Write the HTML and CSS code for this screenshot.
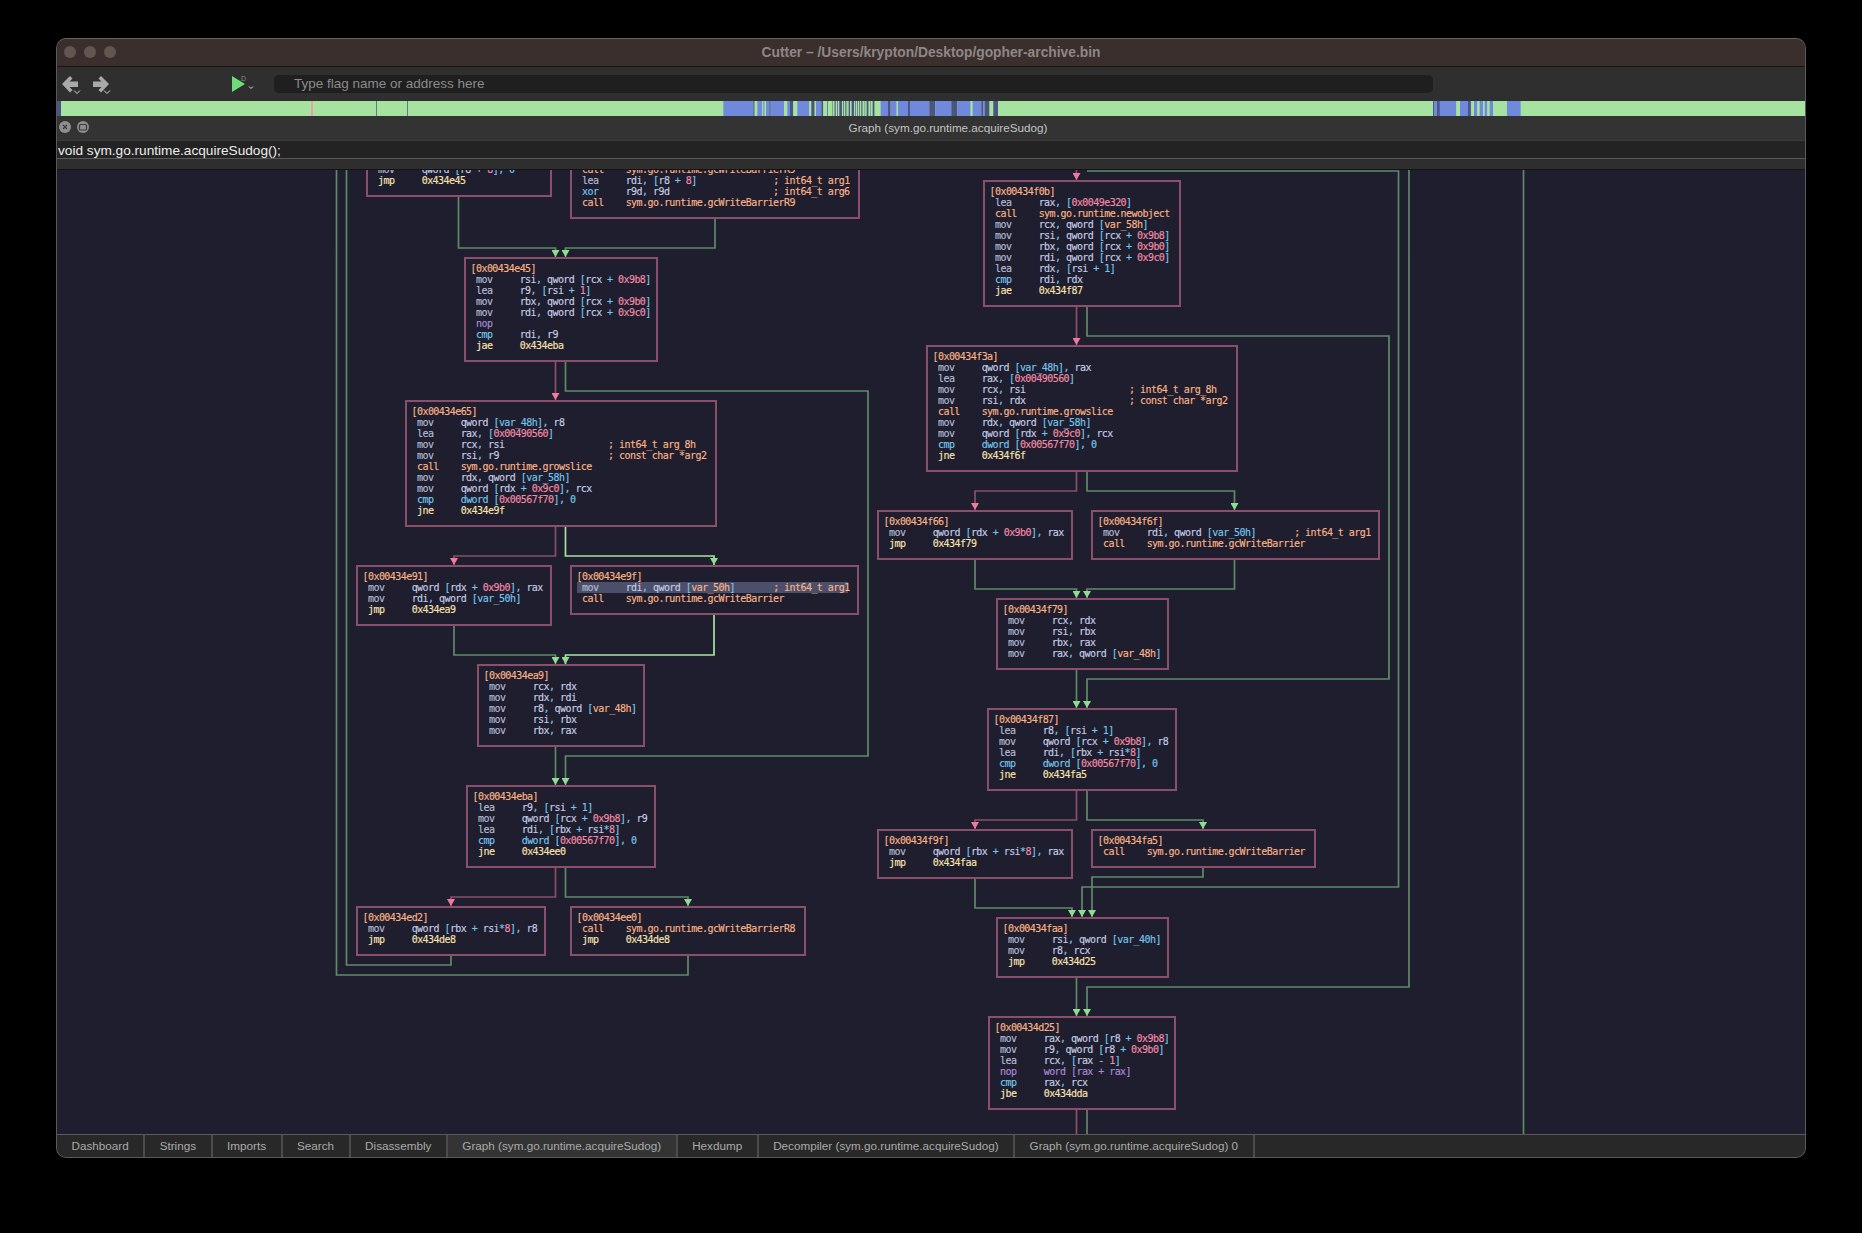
FILE: index.html
```html
<!DOCTYPE html>
<html lang="en">
<head>
    <meta charset="UTF-8">
    <title>Cutter</title>
    <link rel="stylesheet" href="styles.css">
</head>
<body>
    <div class="window">
        <div class="titlebar">
            <div class="lights"><span></span><span></span><span></span></div>
            <div class="title">Cutter – /Users/krypton/Desktop/gopher-archive.bin</div>
        </div>

        <div class="toolbar">
            <svg class="nav" width="22" height="20" viewBox="0 0 22 20">
                <path class="nav-arrow" d="M0 9 8 1l2.5 2.500L7.500 6.500H16v5.500H7.500l3 3L8 17.500z"/>
                <path class="nav-chev" d="M12 15.500l3 3 3-3"/>
            </svg>
            <svg class="nav" width="22" height="20" viewBox="0 0 22 20">
                <path class="nav-arrow" d="M17 9 9 1 6.500 3.500l3 3H1v5.500h8.500l-3 3L9 17.500z"/>
                <path class="nav-chev" d="M12 15.500l3 3 3-3"/>
            </svg>
            <svg class="run" width="28" height="18" viewBox="0 0 28 18">
                <path class="run-play" d="M0 1 13 9 0 17z"/>
                <text class="run-d" x="9" y="6">D</text>
                <path class="nav-chev" d="M17 11.500l2 2 2-2"/>
            </svg>
            <div class="search">Type flag name or address here</div>
        </div>

        <svg class="overview" width="1748" height="15" viewBox="57 0 1748 15">
            <rect class="ov-green" x="57" width="1748" height="15"/>
            <rect class="ov-dark" x="57" width="4" height="15"/>
            <rect class="ov-pink" x="311" width="2" height="15"/>
            <rect class="ov-line" x="376" width="1" height="15"/>
            <rect class="ov-line" x="407" width="1" height="15"/>
            <g transform="translate(720) scale(.3333 1)">
                <rect class="ov-blue" x="10" width="90" height="15"/>
                <rect class="ov-dark" x="100" width="4" height="15"/>
                <rect class="ov-green" x="104" width="8" height="15"/>
                <rect class="ov-blue" x="112" width="15" height="15"/>
                <rect class="ov-green" x="127" width="3" height="15"/>
                <rect class="ov-blue" x="130" width="4" height="15"/>
                <rect class="ov-green" x="134" width="4" height="15"/>
                <rect class="ov-blue" x="138" width="10" height="15"/>
                <rect class="ov-dark" x="148" width="4" height="15"/>
                <rect class="ov-blue" x="152" width="40" height="15"/>
                <rect class="ov-green" x="192" width="10" height="15"/>
                <rect class="ov-blue" x="202" width="8" height="15"/>
                <rect class="ov-dark" x="210" width="10" height="15"/>
                <rect class="ov-green" x="220" width="12" height="15"/>
                <rect class="ov-blue" x="232" width="36" height="15"/>
                <rect class="ov-green" x="268" width="6" height="15"/>
                <rect class="ov-dark" x="274" width="10" height="15"/>
                <rect class="ov-green" x="284" width="4" height="15"/>
                <rect class="ov-blue" x="288" width="16" height="15"/>
                <rect class="ov-dark" x="304" width="6" height="15"/>
                <rect class="ov-green" x="310" width="12" height="15"/>
                <rect class="ov-dark" x="322" width="2" height="15"/>
                <rect class="ov-green" x="324" width="12" height="15"/>
                <rect class="ov-dark" x="336" width="2" height="15"/>
                <rect class="ov-green" x="338" width="4" height="15"/>
                <rect class="ov-dark" x="342" width="2" height="15"/>
                <rect class="ov-green" x="344" width="2" height="15"/>
                <rect class="ov-dark" x="346" width="2" height="15"/>
                <rect class="ov-green" x="348" width="4" height="15"/>
                <rect class="ov-dark" x="352" width="2" height="15"/>
                <rect class="ov-green" x="354" width="4" height="15"/>
                <rect class="ov-dark" x="358" width="8" height="15"/>
                <rect class="ov-green" x="366" width="4" height="15"/>
                <rect class="ov-dark" x="370" width="2" height="15"/>
                <rect class="ov-green" x="372" width="4" height="15"/>
                <rect class="ov-dark" x="376" width="2" height="15"/>
                <rect class="ov-green" x="378" width="2" height="15"/>
                <rect class="ov-dark" x="380" width="2" height="15"/>
                <rect class="ov-green" x="382" width="4" height="15"/>
                <rect class="ov-dark" x="386" width="4" height="15"/>
                <rect class="ov-green" x="390" width="5" height="15"/>
                <rect class="ov-dark" x="395" width="7" height="15"/>
                <rect class="ov-green" x="402" width="4" height="15"/>
                <rect class="ov-dark" x="406" width="2" height="15"/>
                <rect class="ov-green" x="408" width="4" height="15"/>
                <rect class="ov-dark" x="412" width="2" height="15"/>
                <rect class="ov-green" x="414" width="4" height="15"/>
                <rect class="ov-dark" x="418" width="2" height="15"/>
                <rect class="ov-green" x="420" width="4" height="15"/>
                <rect class="ov-dark" x="424" width="4" height="15"/>
                <rect class="ov-green" x="428" width="6" height="15"/>
                <rect class="ov-dark" x="434" width="2" height="15"/>
                <rect class="ov-green" x="436" width="4" height="15"/>
                <rect class="ov-dark" x="440" width="6" height="15"/>
                <rect class="ov-green" x="446" width="4" height="15"/>
                <rect class="ov-dark" x="450" width="2" height="15"/>
                <rect class="ov-green" x="452" width="6" height="15"/>
                <rect class="ov-dark" x="458" width="6" height="15"/>
                <rect class="ov-green" x="464" width="18" height="15"/>
                <rect class="ov-blue" x="482" width="22" height="15"/>
                <rect class="ov-dark" x="504" width="8" height="15"/>
                <rect class="ov-blue" x="512" width="18" height="15"/>
                <rect class="ov-green" x="530" width="4" height="15"/>
                <rect class="ov-blue" x="534" width="30" height="15"/>
                <rect class="ov-dark" x="564" width="6" height="15"/>
                <rect class="ov-blue" x="570" width="58" height="15"/>
                <rect class="ov-dark" x="628" width="18" height="15"/>
                <rect class="ov-blue" x="646" width="48" height="15"/>
                <rect class="ov-dark" x="694" width="18" height="15"/>
                <rect class="ov-blue" x="712" width="40" height="15"/>
                <rect class="ov-green" x="752" width="6" height="15"/>
                <rect class="ov-blue" x="758" width="26" height="15"/>
                <rect class="ov-dark" x="784" width="6" height="15"/>
                <rect class="ov-blue" x="790" width="4" height="15"/>
                <rect class="ov-dark" x="794" width="14" height="15"/>
                <rect class="ov-dark" x="820" width="14" height="15"/>
            </g>
            <g transform="translate(1428) scale(.3333 1)">
                <rect class="ov-blue" x="15" width="70" height="15"/>
                <rect class="ov-dark" x="15" width="3" height="15"/>
                <rect class="ov-dark" x="27" width="8" height="15"/>
                <rect class="ov-green" x="85" width="5" height="15"/>
                <rect class="ov-green" x="93" width="3" height="15"/>
                <rect class="ov-blue" x="96" width="34" height="15"/>
                <rect class="ov-dark" x="120" width="8" height="15"/>
                <rect class="ov-green" x="130" width="8" height="15"/>
                <rect class="ov-blue" x="138" width="10" height="15"/>
                <rect class="ov-green" x="148" width="7" height="15"/>
                <rect class="ov-blue" x="155" width="10" height="15"/>
                <rect class="ov-green" x="165" width="5" height="15"/>
                <rect class="ov-blue" x="170" width="8" height="15"/>
                <rect class="ov-green" x="178" width="7" height="15"/>
                <rect class="ov-blue" x="185" width="10" height="15"/>
                <rect class="ov-blue" x="237" width="41" height="15"/>
            </g>
        </svg>

        <div class="dock-title">
            <div class="dock-btns">
                <svg width="14" height="14" viewBox="0 0 14 14">
                    <circle class="dock-btn" cx="7" cy="7" r="6"/>
                    <path class="dock-mark" d="M5 5l4 4M9 5l-4 4"/>
                </svg>
                <svg width="14" height="14" viewBox="0 0 14 14">
                    <circle class="dock-btn" cx="7" cy="7" r="6"/>
                    <rect class="dock-mark" x="3.500" y="4.500" width="7" height="5.500" rx="1"/>
                </svg>
            </div>
            <div class="dock-name">Graph (sym.go.runtime.acquireSudog)</div>
        </div>

        <div class="signature">void sym.go.runtime.acquireSudog();</div>
        <div class="strip"></div>

        <div class="graph">
            <svg class="edges" width="1748" height="966" viewBox="57 170 1748 966">
                <defs>
                    <marker id="tip-green" markerUnits="userSpaceOnUse" markerWidth="7" markerHeight="8" refX="7" refY="4" orient="auto"><path d="M0 0 7 4 0 8z" fill="#8fdc92"/></marker>
                    <marker id="tip-pink" markerUnits="userSpaceOnUse" markerWidth="7" markerHeight="8" refX="7" refY="4" orient="auto"><path d="M0 0 7 4 0 8z" fill="#f0799f"/></marker>
                </defs>
                <!-- left column -->
                <path class="edge green" d="M336.500 170V975H688V955"/>
                <path class="edge green" d="M346.500 170V965H451V955"/>
                <path class="edge green to" d="M458.500 196V248H555.500V257"/>
                <path class="edge green to" d="M715 218V248H565.500V257"/>
                <path class="edge pink to" d="M555.500 361V400"/>
                <path class="edge green to" d="M565.500 361V391H868V756H565.500V785"/>
                <path class="edge pink to" d="M555.500 526V556H454V565"/>
                <path class="edge bright to" d="M565.500 526V556H714V565"/>
                <path class="edge green to" d="M454 625V655H555.500V664"/>
                <path class="edge bright to" d="M714 614V655H565.500V664"/>
                <path class="edge green to" d="M555.500 746V785"/>
                <path class="edge pink to" d="M555.500 867V897H451V906"/>
                <path class="edge green to" d="M565.500 867V897H688V906"/>
                <!-- right column -->
                <path class="edge pink to" d="M1076.500 170V180"/>
                <path class="edge green to" d="M1087 171H1398.500V887H1082V917"/>
                <path class="edge green to" d="M1409 170V987H1087V1016"/>
                <path class="edge green" d="M1523.500 170V1136"/>
                <path class="edge pink to" d="M1076.500 306V345"/>
                <path class="edge green to" d="M1087 306V336H1389V679H1087V708"/>
                <path class="edge pink to" d="M1076.500 471V491H975V510"/>
                <path class="edge green to" d="M1087 471V491H1234.500V510"/>
                <path class="edge green to" d="M975 559V589H1076.500V598"/>
                <path class="edge green to" d="M1234.500 559V589H1087V598"/>
                <path class="edge green to" d="M1076.500 669V708"/>
                <path class="edge pink to" d="M1076.500 790V820H975V829"/>
                <path class="edge green to" d="M1087 790V820H1203V829"/>
                <path class="edge green to" d="M975 878V908H1072V917"/>
                <path class="edge green to" d="M1203 867V877H1092V917"/>
                <path class="edge green to" d="M1076.500 977V1016"/>
                <path class="edge pink" d="M1076.500 1109V1136"/>
                <path class="edge green" d="M1087 1109V1136"/>
            </svg>

<pre class="node n-a"><span class="c">[0x00434e30]</span>
 <span class="o">mov</span>     qword <span class="p">[</span>r8 <span class="p">+</span> <span class="h">8</span><span class="p">],</span> <span class="p">0</span>
 <span class="j">jmp</span>     <span class="j">0x434e45</span></pre>

<pre class="node n-b"><span class="c">[0x00434e37]</span>
 <span class="c">call</span>    <span class="c">sym.go.runtime.gcWriteBarrierR9</span>
 <span class="o">lea</span>     rdi<span class="p">,</span> <span class="p">[</span>r8 <span class="p">+</span> <span class="h">8</span><span class="p">]</span>              <span class="t">; int64_t arg1</span>
 <span class="k">xor</span>     r9d<span class="p">,</span> r9d                   <span class="t">; int64_t arg6</span>
 <span class="c">call</span>    <span class="c">sym.go.runtime.gcWriteBarrierR9</span></pre>

<pre class="node n-e45"><span class="c">[0x00434e45]</span>
 <span class="o">mov</span>     rsi<span class="p">,</span> qword <span class="p">[</span>rcx <span class="p">+</span> <span class="h">0x9b8</span><span class="p">]</span>
 <span class="o">lea</span>     r9<span class="p">,</span> <span class="p">[</span>rsi <span class="p">+</span> <span class="h">1</span><span class="p">]</span>
 <span class="o">mov</span>     rbx<span class="p">,</span> qword <span class="p">[</span>rcx <span class="p">+</span> <span class="h">0x9b0</span><span class="p">]</span>
 <span class="o">mov</span>     rdi<span class="p">,</span> qword <span class="p">[</span>rcx <span class="p">+</span> <span class="h">0x9c0</span><span class="p">]</span>
 <span class="n">nop</span>
 <span class="k">cmp</span>     rdi<span class="p">,</span> r9
 <span class="j">jae</span>     <span class="j">0x434eba</span></pre>

<pre class="node n-e65"><span class="c">[0x00434e65]</span>
 <span class="o">mov</span>     qword <span class="p">[var_48h],</span> r8
 <span class="o">lea</span>     rax<span class="p">,</span> <span class="p">[</span><span class="h">0x00490560</span><span class="p">]</span>
 <span class="o">mov</span>     rcx<span class="p">,</span> rsi                   <span class="t">; int64_t arg_8h</span>
 <span class="o">mov</span>     rsi<span class="p">,</span> r9                    <span class="t">; const char *arg2</span>
 <span class="c">call</span>    <span class="c">sym.go.runtime.growslice</span>
 <span class="o">mov</span>     rdx<span class="p">,</span> qword <span class="p">[var_58h]</span>
 <span class="o">mov</span>     qword <span class="p">[</span>rdx <span class="p">+</span> <span class="h">0x9c0</span><span class="p">],</span> rcx
 <span class="k">cmp</span>     <span class="k">dword [</span><span class="h">0x00567f70</span><span class="k">], 0</span>
 <span class="j">jne</span>     <span class="j">0x434e9f</span></pre>

<pre class="node n-e91"><span class="c">[0x00434e91]</span>
 <span class="o">mov</span>     qword <span class="p">[</span>rdx <span class="p">+</span> <span class="h">0x9b0</span><span class="p">],</span> rax
 <span class="o">mov</span>     rdi<span class="p">,</span> qword <span class="p">[var_50h]</span>
 <span class="j">jmp</span>     <span class="j">0x434ea9</span></pre>

<pre class="node n-e9f"><span class="c">[0x00434e9f]</span>
<span class="sel"> <span class="o">mov</span>     rdi<span class="p">,</span> qword <span class="p">[</span><span class="v">var_50h</span><span class="p">]</span>       <span class="t">; int64_t arg1</span></span>
 <span class="c">call</span>    <span class="c">sym.go.runtime.gcWriteBarrier</span></pre>

<pre class="node n-ea9"><span class="c">[0x00434ea9]</span>
 <span class="o">mov</span>     rcx<span class="p">,</span> rdx
 <span class="o">mov</span>     rdx<span class="p">,</span> rdi
 <span class="o">mov</span>     r8<span class="p">,</span> qword <span class="p">[</span><span class="v">var_48h</span><span class="p">]</span>
 <span class="o">mov</span>     rsi<span class="p">,</span> rbx
 <span class="o">mov</span>     rbx<span class="p">,</span> rax</pre>

<pre class="node n-eba"><span class="c">[0x00434eba]</span>
 <span class="o">lea</span>     r9<span class="p">,</span> <span class="p">[</span>rsi <span class="p">+</span> <span class="p">1]</span>
 <span class="o">mov</span>     qword <span class="p">[</span>rcx <span class="p">+</span> <span class="h">0x9b8</span><span class="p">],</span> r9
 <span class="o">lea</span>     rdi<span class="p">,</span> <span class="p">[</span>rbx <span class="p">+</span> rsi<span class="p">*</span><span class="h">8</span><span class="p">]</span>
 <span class="k">cmp</span>     <span class="k">dword [</span><span class="h">0x00567f70</span><span class="k">], 0</span>
 <span class="j">jne</span>     <span class="j">0x434ee0</span></pre>

<pre class="node n-ed2"><span class="c">[0x00434ed2]</span>
 <span class="o">mov</span>     qword <span class="p">[</span>rbx <span class="p">+</span> rsi<span class="p">*</span><span class="h">8</span><span class="p">],</span> r8
 <span class="j">jmp</span>     <span class="j">0x434de8</span></pre>

<pre class="node n-ee0"><span class="c">[0x00434ee0]</span>
 <span class="c">call</span>    <span class="c">sym.go.runtime.gcWriteBarrierR8</span>
 <span class="j">jmp</span>     <span class="j">0x434de8</span></pre>

<pre class="node n-f0b"><span class="c">[0x00434f0b]</span>
 <span class="o">lea</span>     rax<span class="p">,</span> <span class="p">[</span><span class="h">0x0049e320</span><span class="p">]</span>
 <span class="c">call</span>    <span class="c">sym.go.runtime.newobject</span>
 <span class="o">mov</span>     rcx<span class="p">,</span> qword <span class="p">[</span><span class="v">var_58h</span><span class="p">]</span>
 <span class="o">mov</span>     rsi<span class="p">,</span> qword <span class="p">[</span>rcx <span class="p">+</span> <span class="h">0x9b8</span><span class="p">]</span>
 <span class="o">mov</span>     rbx<span class="p">,</span> qword <span class="p">[</span>rcx <span class="p">+</span> <span class="h">0x9b0</span><span class="p">]</span>
 <span class="o">mov</span>     rdi<span class="p">,</span> qword <span class="p">[</span>rcx <span class="p">+</span> <span class="h">0x9c0</span><span class="p">]</span>
 <span class="o">lea</span>     rdx<span class="p">,</span> <span class="p">[</span>rsi <span class="p">+</span> <span class="p">1]</span>
 <span class="k">cmp</span>     rdi<span class="p">,</span> rdx
 <span class="j">jae</span>     <span class="j">0x434f87</span></pre>

<pre class="node n-f3a"><span class="c">[0x00434f3a]</span>
 <span class="o">mov</span>     qword <span class="p">[var_48h],</span> rax
 <span class="o">lea</span>     rax<span class="p">,</span> <span class="p">[</span><span class="h">0x00490560</span><span class="p">]</span>
 <span class="o">mov</span>     rcx<span class="p">,</span> rsi                   <span class="t">; int64_t arg_8h</span>
 <span class="o">mov</span>     rsi<span class="p">,</span> rdx                   <span class="t">; const char *arg2</span>
 <span class="c">call</span>    <span class="c">sym.go.runtime.growslice</span>
 <span class="o">mov</span>     rdx<span class="p">,</span> qword <span class="p">[var_58h]</span>
 <span class="o">mov</span>     qword <span class="p">[</span>rdx <span class="p">+</span> <span class="h">0x9c0</span><span class="p">],</span> rcx
 <span class="k">cmp</span>     <span class="k">dword [</span><span class="h">0x00567f70</span><span class="k">], 0</span>
 <span class="j">jne</span>     <span class="j">0x434f6f</span></pre>

<pre class="node n-f66"><span class="c">[0x00434f66]</span>
 <span class="o">mov</span>     qword <span class="p">[</span>rdx <span class="p">+</span> <span class="h">0x9b0</span><span class="p">],</span> rax
 <span class="j">jmp</span>     <span class="j">0x434f79</span></pre>

<pre class="node n-f6f"><span class="c">[0x00434f6f]</span>
 <span class="o">mov</span>     rdi<span class="p">,</span> qword <span class="p">[var_50h]</span>       <span class="t">; int64_t arg1</span>
 <span class="c">call</span>    <span class="c">sym.go.runtime.gcWriteBarrier</span></pre>

<pre class="node n-f79"><span class="c">[0x00434f79]</span>
 <span class="o">mov</span>     rcx<span class="p">,</span> rdx
 <span class="o">mov</span>     rsi<span class="p">,</span> rbx
 <span class="o">mov</span>     rbx<span class="p">,</span> rax
 <span class="o">mov</span>     rax<span class="p">,</span> qword <span class="p">[</span><span class="v">var_48h</span><span class="p">]</span></pre>

<pre class="node n-f87"><span class="c">[0x00434f87]</span>
 <span class="o">lea</span>     r8<span class="p">,</span> <span class="p">[</span>rsi <span class="p">+</span> <span class="p">1]</span>
 <span class="o">mov</span>     qword <span class="p">[</span>rcx <span class="p">+</span> <span class="h">0x9b8</span><span class="p">],</span> r8
 <span class="o">lea</span>     rdi<span class="p">,</span> <span class="p">[</span>rbx <span class="p">+</span> rsi<span class="p">*</span><span class="h">8</span><span class="p">]</span>
 <span class="k">cmp</span>     <span class="k">dword [</span><span class="h">0x00567f70</span><span class="k">], 0</span>
 <span class="j">jne</span>     <span class="j">0x434fa5</span></pre>

<pre class="node n-f9f"><span class="c">[0x00434f9f]</span>
 <span class="o">mov</span>     qword <span class="p">[</span>rbx <span class="p">+</span> rsi<span class="p">*</span><span class="h">8</span><span class="p">],</span> rax
 <span class="j">jmp</span>     <span class="j">0x434faa</span></pre>

<pre class="node n-fa5"><span class="c">[0x00434fa5]</span>
 <span class="c">call</span>    <span class="c">sym.go.runtime.gcWriteBarrier</span></pre>

<pre class="node n-faa"><span class="c">[0x00434faa]</span>
 <span class="o">mov</span>     rsi<span class="p">,</span> qword <span class="p">[var_40h]</span>
 <span class="o">mov</span>     r8<span class="p">,</span> rcx
 <span class="j">jmp</span>     <span class="j">0x434d25</span></pre>

<pre class="node n-d25"><span class="c">[0x00434d25]</span>
 <span class="o">mov</span>     rax<span class="p">,</span> qword <span class="p">[</span>r8 <span class="p">+</span> <span class="h">0x9b8</span><span class="p">]</span>
 <span class="o">mov</span>     r9<span class="p">,</span> qword <span class="p">[</span>r8 <span class="p">+</span> <span class="h">0x9b0</span><span class="p">]</span>
 <span class="o">lea</span>     rcx<span class="p">,</span> <span class="p">[</span>rax <span class="p">-</span> <span class="h">1</span><span class="p">]</span>
 <span class="n">nop</span>     <span class="n">word [rax + rax]</span>
 <span class="k">cmp</span>     rax<span class="p">,</span> rcx
 <span class="j">jbe</span>     <span class="j">0x434dda</span></pre>
        </div>

        <div class="tabs">
            <div class="tab">Dashboard</div>
            <div class="tab">Strings</div>
            <div class="tab">Imports</div>
            <div class="tab">Search</div>
            <div class="tab">Disassembly</div>
            <div class="tab active">Graph (sym.go.runtime.acquireSudog)</div>
            <div class="tab">Hexdump</div>
            <div class="tab">Decompiler (sym.go.runtime.acquireSudog)</div>
            <div class="tab">Graph (sym.go.runtime.acquireSudog) 0</div>
        </div>
    </div>
</body>
</html>
```

FILE: styles.css
```css
html, body {
    height: 100%;
}
body {
    margin: 0;
    background-color: #000;
    font-family: "Liberation Sans", Arial, sans-serif;
    overflow: hidden;
}
.window {
    display: flex;
    flex-direction: column;
    box-sizing: border-box;
    width: 1750px;
    height: 1120px;
    margin: 38px 56px 0;
    border: 1px solid #5a5a5a;
    border-top-color: #6a6460;
    border-radius: 10px;
    overflow: hidden;
    background-color: #2e2e2e;
}

/* title bar */
.titlebar {
    position: relative;
    flex: 0 0 27px;
    display: flex;
    align-items: center;
    justify-content: center;
    background-color: #3b2f2d;
    border-bottom: 1px solid #161616;
}
.lights {
    position: absolute;
    left: 7px;
    top: 7px;
    display: flex;
    gap: 8px;
}
.lights span {
    width: 12px;
    height: 12px;
    border-radius: 50%;
    background-color: #62564f;
}
.title {
    font-size: 13.8px;
    font-weight: bold;
    color: #8e8886;
}

/* toolbar */
.toolbar {
    flex: 0 0 34px;
    display: flex;
    align-items: center;
    padding-left: 5px;
    background-color: #2f2f2f;
}
.nav {
    margin-right: 8px;
    margin-top: 2px;
}
.nav-arrow {
    fill: #a9a9a9;
}
.nav-chev {
    fill: none;
    stroke: #d8d8d8;
    stroke-width: 1;
}
.run {
    margin-left: 110px;
    margin-right: 14px;
}
.run-play {
    fill: #6fdc7a;
}
.run-d {
    font-size: 7px;
    fill: #8a8a8a;
}
.search {
    width: 1139px;
    height: 18px;
    line-height: 18px;
    padding-left: 20px;
    border-radius: 5px;
    background-color: #1f1f1f;
    color: #8b8b8b;
    font-size: 13.5px;
}

/* overview bar */
.overview {
    flex: 0 0 15px;
    display: block;
}
.ov-green {
    fill: #a6e3a1;
}
.ov-blue {
    fill: #7089dd;
}
.ov-dark {
    fill: #4c5482;
}
.ov-pink {
    fill: #e8a2a2;
}
.ov-line {
    fill: #6b7a78;
}

/* dock widget title */
.dock-title {
    flex: 0 0 24px;
    position: relative;
    display: flex;
    align-items: center;
    justify-content: center;
    background-color: #333;
}
.dock-btns {
    position: absolute;
    left: 1px;
    top: 4px;
    display: flex;
    gap: 4px;
}
.dock-btn {
    fill: #8e8e8e;
}
.dock-mark {
    fill: none;
    stroke: #3a3a3a;
    stroke-width: 1.2;
}
.dock-name {
    margin-left: 34px;
    margin-bottom: 2px;
    font-size: 11.7px;
    color: #c4c4c4;
}

.signature {
    flex: 0 0 17px;
    height: 17px;
    padding-left: 1px;
    line-height: 19px;
    font-size: 13.65px;
    color: #ececec;
    background-color: #232323;
    border-top: 1px solid #3c3c3c;
    border-bottom: 1px solid #595959;
}
.strip {
    flex: 0 0 10px;
    background-color: #2e2e2e;
    border-bottom: 1px solid #141414;
}

/* graph canvas */
.graph {
    position: relative;
    flex: 1;
    overflow: hidden;
    background-color: #1e1e2e;
}
.edges {
    position: absolute;
    left: 0;
    top: 0;
}
.edge {
    fill: none;
    stroke-width: 1.7;
}
.green {
    stroke: #5f8a68;
}
.bright {
    stroke: #a6e3a1;
}
.pink {
    stroke: #8b4f6b;
}
.green.to, .bright.to {
    marker-end: url(#tip-green);
}
.pink.to {
    marker-end: url(#tip-pink);
}

.node {
    position: absolute;
    box-sizing: border-box;
    margin: 0;
    padding: 4px 0 0 4.5px;
    border: 2px solid #8b4f6b;
    background-color: #1e1e2e;
    color: #c6cde6;
    font-family: "DejaVu Sans Mono", monospace;
    font-size: 10px;
    letter-spacing: -0.56px;
    line-height: 11px;
    white-space: pre;
    -webkit-text-stroke: 0.15px;
}
.node .o { color: #b4bcd6; }
.node .c { color: #fab387; }
.node .k { color: #74c7ec; }
.node .j { color: #f9e2af; }
.node .n { color: #a98ad8; }
.node .p { color: #74c7ec; }
.node .h { color: #f38ba8; }
.node .v { color: #fab387; }
.node .t { color: #fab387; }
.sel {
    display: inline-block;
    width: 271px;
    background-color: #4c4f69;
}

.n-a { left: 309px; top: -23px; width: 186px; height: 50px; }
.n-b { left: 513px; top: -23px; width: 290px; height: 72px; }
.n-e45 { left: 407px; top: 87px; width: 194px; height: 105px; }
.n-e65 { left: 348px; top: 230px; width: 312px; height: 127px; }
.n-e91 { left: 299px; top: 395px; width: 196px; height: 61px; }
.n-e9f { left: 513px; top: 395px; width: 289px; height: 50px; }
.n-ea9 { left: 420px; top: 494px; width: 168px; height: 83px; }
.n-eba { left: 409px; top: 615px; width: 190px; height: 83px; }
.n-ed2 { left: 299px; top: 736px; width: 190px; height: 50px; }
.n-ee0 { left: 513px; top: 736px; width: 236px; height: 50px; }
.n-f0b { left: 926px; top: 10px; width: 198px; height: 127px; }
.n-f3a { left: 869px; top: 175px; width: 312px; height: 127px; }
.n-f66 { left: 820px; top: 340px; width: 196px; height: 50px; }
.n-f6f { left: 1034px; top: 340px; width: 289px; height: 50px; }
.n-f79 { left: 939px; top: 428px; width: 173px; height: 72px; }
.n-f87 { left: 930px; top: 538px; width: 190px; height: 83px; }
.n-f9f { left: 820px; top: 659px; width: 196px; height: 50px; }
.n-fa5 { left: 1034px; top: 659px; width: 225px; height: 39px; }
.n-faa { left: 939px; top: 747px; width: 173px; height: 61px; }
.n-d25 { left: 931px; top: 846px; width: 188px; height: 94px; }

/* bottom tabs */
.tabs {
    flex: 0 0 22px;
    display: flex;
    background-color: #282828;
    border-top: 1px solid #5a5a5a;
}
.tab {
    padding: 0 14.5px;
    line-height: 22px;
    font-size: 11.7px;
    color: #aaa;
    border-right: 2px solid #4c4c4c;
}
.tab.active {
    background-color: #343434;
}
```
